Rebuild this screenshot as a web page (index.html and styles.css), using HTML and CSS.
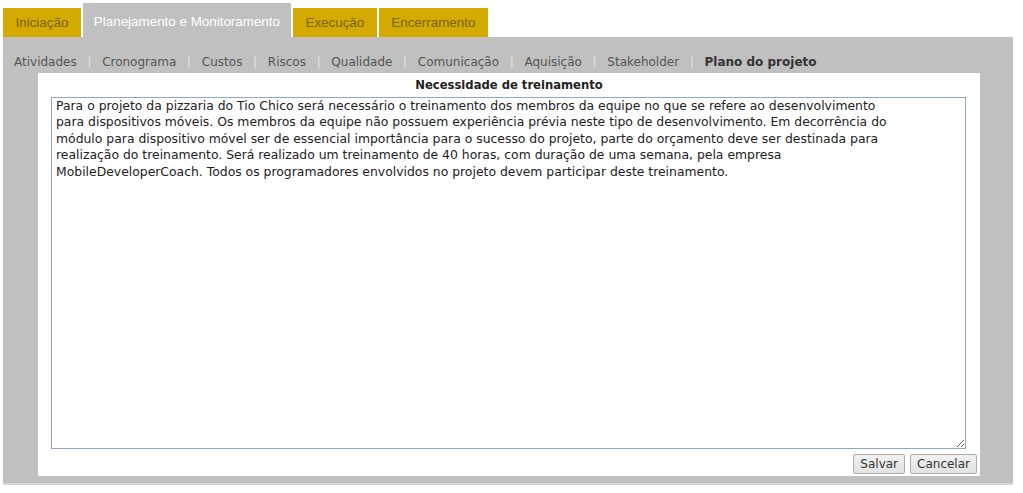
FILE: index.html
```html
<!DOCTYPE html>
<html>
<head>
    <meta charset="utf-8">
    <title>Plano do projeto</title>
    <link rel="stylesheet" href="styles.css">
</head>
<body>

    <div class="tabs">
        <a class="tab">Iniciação</a>
        <a class="tab active">Planejamento e Monitoramento</a>
        <a class="tab">Execução</a>
        <a class="tab">Encerramento</a>
    </div>

    <div class="panel">
        <div class="submenu">
            <a>Atividades</a><span class="sep">|</span>
            <a>Cronograma</a><span class="sep">|</span>
            <a>Custos</a><span class="sep">|</span>
            <a>Riscos</a><span class="sep">|</span>
            <a>Qualidade</a><span class="sep">|</span>
            <a>Comunicação</a><span class="sep">|</span>
            <a>Aquisição</a><span class="sep">|</span>
            <a>Stakeholder</a><span class="sep">|</span>
            <a class="current">Plano do projeto</a>
        </div>

        <div class="box">
            <div class="title">Necessidade de treinamento</div>
            <textarea class="text">Para o projeto da pizzaria do Tio Chico será necessário o treinamento dos membros da equipe no que se refere ao desenvolvimento
para dispositivos móveis. Os membros da equipe não possuem experiência prévia neste tipo de desenvolvimento. Em decorrência do
módulo para dispositivo móvel ser de essencial importância para o sucesso do projeto, parte do orçamento deve ser destinada para
realização do treinamento. Será realizado um treinamento de 40 horas, com duração de uma semana, pela empresa
MobileDeveloperCoach. Todos os programadores envolvidos no projeto devem participar deste treinamento.</textarea>
            <div class="actions">
                <button class="btn">Salvar</button>
                <button class="btn">Cancelar</button>
            </div>
        </div>
    </div>

</body>
</html>
```

FILE: styles.css
```css
html, body {
    height: 100%; width: 100%;
}
body {
    margin: 0;
    background: #FFF;
    font-family: "DejaVu Sans", Verdana, sans-serif;
    font-size: 12px;
    color: #333;
}

/* top tabs */
.tabs {
    display: flex;
    align-items: flex-end;
    gap: 2px;
    padding: 3px 0 0 3px;
}
.tab {
    display: block;
    height: 29px;
    line-height: 29px;
    padding: 0 12.5px;
    background: #D4A900;
    color: #7A6300;
    font-family: "Liberation Sans", Arial, sans-serif;
    font-size: 13.4px;
    box-sizing: border-box;
}
.tab.active {
    height: 34px;
    line-height: 38px;
    padding: 0 11px;
    background: #C0C0C0;
    color: #FFF;
}

/* gray panel */
.panel {
    width: 1010px;
    margin-left: 3px;
    background: #C0C0C0;
    padding-bottom: 7px;
    border-bottom: 2px solid #D6D6D6;
}
.submenu {
    display: flex;
    padding: 17px 0 3px 11px;
    line-height: 16px;
    font-size: 12px;
}
.submenu a {
    color: #555;
}
.submenu a.current {
    color: #333;
    font-weight: bold;
}
.submenu .sep {
    padding: 0 10.7px;
    color: #E4E4E4;
}

/* white content box */
.box {
    margin: 0 33px 0 35px;
    background: #FFF;
    padding: 4px 3px 2px 13px;
}
.title {
    text-align: center;
    font-weight: bold;
    font-size: 11.6px;
    line-height: 16px;
    margin-right: 10px;
    margin-bottom: 4px;
    color: #222;
}
.text {
    display: block;
    width: 915px;
    height: 352px;
    box-sizing: border-box;
    margin: 0;
    padding: 0 4px;
    border: 1px solid #8FA8C8;
    font-family: "DejaVu Sans", Verdana, sans-serif;
    font-size: 12.4px;
    line-height: 16.4px;
    color: #222;
    white-space: pre;
    overflow: hidden;
}
.actions {
    display: flex;
    justify-content: flex-end;
    gap: 5px;
    padding-top: 5px;
}
.btn {
    height: 20px;
    padding: 0 6px;
    border: 1px solid #ACACAC;
    border-radius: 2px;
    background: linear-gradient(#F2F2F2, #E2E2E2);
    font-family: "DejaVu Sans", Verdana, sans-serif;
    font-size: 12px;
    color: #333;
}
```
